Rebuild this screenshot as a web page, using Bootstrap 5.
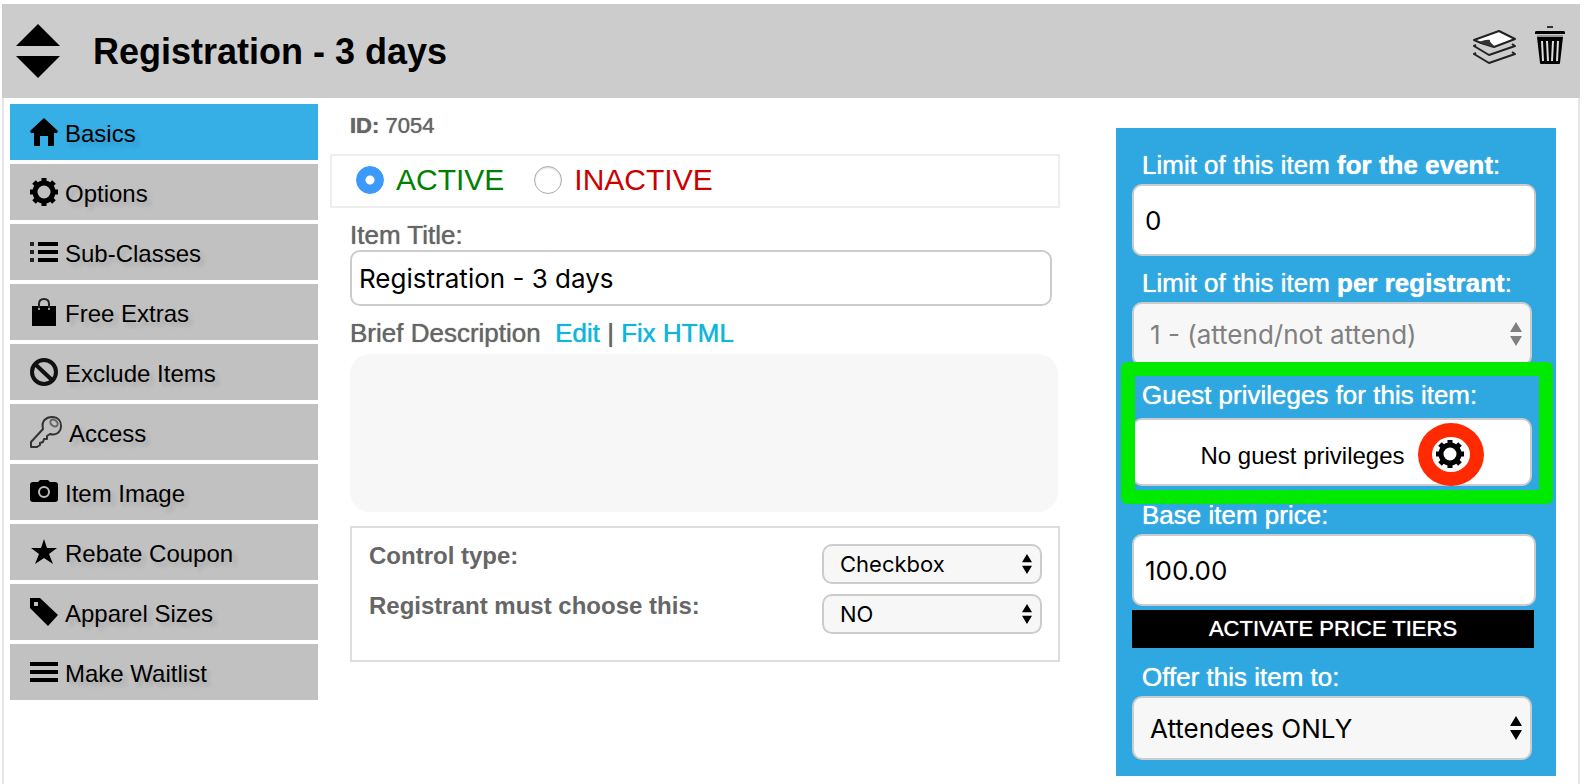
<!DOCTYPE html>
<html lang="en">
<head>
<meta charset="utf-8">
<meta name="viewport" content="width=device-width, initial-scale=1">
<title>Registration - 3 days</title>
<link href="https://cdn.jsdelivr.net/npm/bootstrap@5.3.0/dist/css/bootstrap.min.css" rel="stylesheet">
<style>
  body { font-family: "Liberation Sans", Arial, sans-serif; font-size: 26px; line-height: 36px; color: #666; background: #fff; }
  .page-frame { padding: 4px 8px 0 2px; }
  .item-header { background: #ccc; height: 94px; padding: 0 14px; }
  .item-header h1 { font-size: 36px; line-height: 44px; font-weight: 700; color: #000; margin-left: 33px; padding-top: 2px; }
  .item-body { border: solid #e5e5e5; border-width: 0 2px; padding: 6px 22px 8px 6px; }
  .icon-btn { border: 0; background: none; padding: 0; display: block; }
  .icon-btn svg, .side-link svg { display: block; flex: none; }
  .tool-btn { margin-bottom: 12px; }

  .side-nav { width: 308px; gap: 4px; }
  .side-link { height: 56px; padding-left: 20px; gap: 7px; background: #c1c1c1; color: #000; font-size: 24px; text-decoration: none; text-shadow: 4px 4px 4px rgba(0,0,0,.12); }
  .side-link span { padding-top: 4px; }
  .side-link.current { background: #36aee6; }

  .main-col { margin: 0 56px 0 12px; min-width: 0; }
  .indent { margin-left: 20px; }
  .soft-bold { text-shadow: 0 0 1px currentColor; }
  .item-id { font-size: 22px; line-height: 44px; }
  .status-box { border: 2px solid #eee; height: 54px; padding: 0 24px 2px; margin-top: 6px; font-size: 30px; }
  .status-box .form-check-input { width: 28px; height: 28px; margin: 0 12px 0 0; border: 1px solid #aaa; box-shadow: inset 0 1px 2px rgba(0,0,0,.15); }
  .status-box .form-check-input:checked { background: radial-gradient(circle, #fff 4px, #3b99fc 5px); border-color: #3b99fc; box-shadow: none; }
  .c-on { color: #008000; margin-right: 30px; }
  .c-off { color: #c00; }
  .title-label { line-height: 30px; margin-top: 12px; }
  .field { font-family: Inter, sans-serif; font-size: 26px; color: #000; border: 2px solid #ccc; border-radius: 10px; background-color: #fff; }
  .title-field { height: 56px; padding: 0 7px; }
  .desc-row { line-height: 38px; margin-top: 8px; margin-bottom: 2px; }
  .desc-row a { color: #14b4da; text-decoration: none; }
  .desc-box { background: #f7f7f7; border-radius: 20px; height: 158px; margin-right: 2px; }
  .control-box { border: 2px solid #ddd; margin-top: 14px; padding: 10px 16px 22px 17px; font-size: 24px; font-weight: 700; }
  .control-row { height: 50px; }
  .pick { background: #f7f7f7 url("data:image/svg+xml,%3Csvg xmlns='http://www.w3.org/2000/svg' viewBox='0 0 12 24'%3E%3Cpath d='M6 0l6 10H0zM6 24l6-10H0z'/%3E%3C/svg%3E") no-repeat right 8px center / 12px 24px; }
  .pick:disabled { color: #808080; background-color: #f7f7f7; background-image: url("data:image/svg+xml,%3Csvg xmlns='http://www.w3.org/2000/svg' viewBox='0 0 12 24'%3E%3Cpath fill='%23808080' d='M6 0l6 10H0zM6 24l6-10H0z'/%3E%3C/svg%3E"); }
  .pick-sm { width: 220px; height: 40px; font-size: 22px; padding: 0 30px 0 16px; margin-top: 6px; line-height: 32px; background-size: 10px 20px; }

  .limits { width: 440px; margin-top: 24px; padding: 20px 20px 16px 16px; background: #2fa8e1; color: #fff; }
  .limits label, .limits .guest-label { display: block; padding-left: 10px; line-height: 34px; padding-bottom: 2px; }
  .limits .field-lg { height: 72px; padding: 0 11px; }
  .limits .pick-lg { width: calc(100% - 4px); height: 64px; padding: 0 30px 0 16px; }
  .gap-s { margin-top: 10px; }
  .gap-m { margin-top: 12px; }
  .guest-box { padding-top: 2px; }
  .guest-btn { width: calc(100% - 4px); height: 68px; margin-top: 4px; border: 2px solid #ccc; border-radius: 10px; background: #fff; color: #000; font-size: 24px; gap: 31px; padding: 8px 0 0; }
  .guest-btn svg { margin-bottom: 4px; }
  .tiers { width: calc(100% - 2px); height: 38px; line-height: 38px; margin-top: 4px; border: 0; padding: 0; background: #000; color: #fff; font-size: 22px; }
  .green-mark { inset: -14px -17px -18px -11px; border: 14px solid #00ea00; border-radius: 6px; pointer-events: none; }
  .red-mark { width: 66px; height: 63px; left: -18px; top: -17px; border: 14px solid #ff2a00; border-radius: 50%; }
</style>
</head>
<body>
<svg class="d-none" xmlns="http://www.w3.org/2000/svg">
  <symbol id="gear" viewBox="0 0 28 28">
    <circle cx="14" cy="14" r="9" fill="none" stroke="currentColor" stroke-width="5"/>
    <path stroke="currentColor" stroke-width="5" d="M14 0v5M14 23v5M0 14h5M23 14h5M4 4l4 4M20 20l4 4M24 4l-4 4M8 20l-4 4"/>
  </symbol>
</svg>
<div class="page-frame min-vh-100 d-flex flex-column">
  <header class="item-header d-flex align-items-center">
    <button class="icon-btn" type="button" aria-label="Move item">
      <svg width="44" height="54" viewBox="0 0 44 54"><path d="M22 0l22 22H0zM22 54l22-22H0z"/></svg>
    </button>
    <h1 class="mb-0 me-auto">Registration - 3 days</h1>
    <button class="icon-btn tool-btn me-3" type="button" aria-label="Duplicate item">
      <svg width="46" height="40" viewBox="0 -4 46 40">
        <g fill="none" stroke="#222" stroke-width="2" stroke-linejoin="round">
          <path d="M4 24l-2 1 15 9 26-9-3-2"/><path d="M4 16l-2 1 15 9 26-9-3-2"/>
        </g>
        <path fill="#fff" stroke="#222" stroke-width="2" stroke-linejoin="round" d="M2 11L27 2l16 8-21 8-13-4z"/>
        <path fill="#333" d="M3 12c7 2 9-2 15-1-1 2 3 4 5 7-6 0-8-3-20-6z"/>
      </svg>
    </button>
    <button class="icon-btn tool-btn" type="button" aria-label="Delete item">
      <svg width="32" height="40" viewBox="0 0 32 40">
        <path fill="#333" d="M13 1h6v2h-6z"/><path d="M1 7q0-1 2-1h26q2 0 2 1v2H1z"/><path fill="#999" d="M3 10h26v2H3z"/>
        <path d="M3 12h26l-3 26q0 1-1 1H7q-1 0-1-1z"/>
        <path stroke="#ddd" stroke-width="2" d="M8 16l1 20M13 16l1 20M19 16l-1 20M24 16l-1 20"/>
      </svg>
    </button>
  </header>

  <div class="item-body d-flex flex-grow-1 align-items-start">
    <nav class="side-nav d-flex flex-column flex-shrink-0" aria-label="Item sections">
      <a href="#" class="side-link current d-flex align-items-center"><svg width="28" height="28" viewBox="0 0 28 28"><path d="M14 0l14 13-1 2h-3v13h-6V18h-8v10H4V15H1l-1-2z"/></svg><span>Basics</span></a>
      <a href="#" class="side-link d-flex align-items-center"><svg width="28" height="28"><use href="#gear"/></svg><span>Options</span></a>
      <a href="#" class="side-link d-flex align-items-center"><svg width="28" height="28" viewBox="0 0 28 28"><path fill="#222" d="M0 4h4v4H0zM0 12h4v4H0zM0 20h4v4H0z"/><path d="M8 4h20v4H8zM8 12h20v4H8zM8 20h20v4H8z"/></svg><span>Sub-Classes</span></a>
      <a href="#" class="side-link d-flex align-items-center"><svg width="28" height="28" viewBox="0 0 28 28"><path d="M2 8h24v20H2z"/><path fill="none" stroke="#222" stroke-width="2" d="M9 10V6q0-5 5-5t5 5v4"/><path fill="#999" d="M8 10h2v2H8zM18 10h2v2h-2z"/></svg><span>Free Extras</span></a>
      <a href="#" class="side-link d-flex align-items-center"><svg width="28" height="28" viewBox="0 0 28 28"><g fill="none" stroke="#111" stroke-width="4"><circle cx="14" cy="14" r="12"/><path d="M5 6l18 17"/></g></svg><span>Exclude Items</span></a>
      <a href="#" class="side-link d-flex align-items-center"><svg width="32" height="32" viewBox="0 0 32 32"><g fill="none" stroke="#333" stroke-width="2" stroke-linejoin="round"><path d="M13 13C11 5 16 1 22 1c6 0 9 4 9 9 0 6-5 10-11 8l-3 2v3h-3l-1 3-3 1v2l-3 2H1v-5z"/><ellipse cx="24" cy="7" rx="4" ry="3" transform="rotate(40 24 7)" stroke="#666"/></g></svg><span>Access</span></a>
      <a href="#" class="side-link d-flex align-items-center"><svg width="28" height="28" viewBox="0 0 28 28"><path d="M3 4h5l2-2h8l2 2h5q3 0 3 3v14q0 3-3 3H3q-3 0-3-3V7q0-3 3-3z"/><circle cx="14" cy="14" r="5" fill="none" stroke="#bbb" stroke-width="2"/></svg><span>Item Image</span></a>
      <a href="#" class="side-link d-flex align-items-center"><svg width="28" height="28" viewBox="0 0 28 28"><path d="M14 1l3 9h10l-8 6 4 10-9-6-9 6 4-10-8-6h10z"/></svg><span>Rebate Coupon</span></a>
      <a href="#" class="side-link d-flex align-items-center"><svg width="28" height="28" viewBox="0 0 28 28"><path fill-rule="evenodd" d="M0 0h10l18 17-10 11L0 10zM4 4v4h4V4z"/></svg><span>Apparel Sizes</span></a>
      <a href="#" class="side-link d-flex align-items-center"><svg width="28" height="28" viewBox="0 0 28 28"><path d="M0 4h28v4H0zM0 12h28v4H0zM0 20h28v4H0z"/></svg><span>Make Waitlist</span></a>
    </nav>

    <main class="main-col flex-grow-1">
      <div class="item-id indent soft-bold"><b>ID:</b> 7054</div>
      <div class="status-box d-flex align-items-center">
        <input class="form-check-input" type="radio" name="status" id="st-on" checked><label class="c-on" for="st-on">ACTIVE</label>
        <input class="form-check-input" type="radio" name="status" id="st-off"><label class="c-off" for="st-off">INACTIVE</label>
      </div>
      <div class="indent">
        <label class="title-label soft-bold d-block" for="title">Item Title:</label>
        <div class="pe-2"><input class="field title-field w-100 d-block" id="title" type="text" value="Registration - 3 days"></div>
        <div class="desc-row soft-bold">Brief Description&nbsp; <a href="#">Edit</a> | <a href="#">Fix HTML</a></div>
        <div class="desc-box"></div>
        <div class="control-box">
          <div class="control-row d-flex justify-content-between align-items-start">
            <label for="ctype">Control type:</label>
            <select class="form-select field pick pick-sm" id="ctype"><option>Checkbox</option></select>
          </div>
          <div class="control-row d-flex justify-content-between align-items-start">
            <label for="must">Registrant must choose this:</label>
            <select class="form-select field pick pick-sm" id="must"><option>NO</option></select>
          </div>
        </div>
      </div>
    </main>

    <aside class="limits flex-shrink-0">
      <label class="soft-bold" for="lim-event">Limit of this item <b>for the event</b>:</label>
      <input class="field field-lg w-100 d-block" id="lim-event" type="text" value="0">
      <label class="gap-s soft-bold" for="lim-reg">Limit of this item <b>per registrant</b>:</label>
      <select class="form-select field pick pick-lg" id="lim-reg" disabled><option>1 - (attend/not attend)</option></select>
      <div class="gap-s guest-box position-relative">
        <div class="guest-label soft-bold">Guest privileges for this item:</div>
        <button class="guest-btn d-flex align-items-center justify-content-center" type="button">
          <span>No guest privileges</span>
          <span class="position-relative"><svg class="d-block" width="28" height="28"><use href="#gear"/></svg><span class="red-mark position-absolute"></span></span>
        </button>
        <div class="green-mark position-absolute"></div>
      </div>
      <label class="gap-m soft-bold" for="price">Base item price:</label>
      <input class="field field-lg w-100 d-block" id="price" type="text" value="100.00">
      <button class="tiers soft-bold d-block" type="button">ACTIVATE PRICE TIERS</button>
      <label class="gap-m soft-bold" for="offer">Offer this item to:</label>
      <select class="form-select field pick pick-lg" id="offer"><option>Attendees ONLY</option></select>
    </aside>
  </div>
</div>
<script src="https://cdn.jsdelivr.net/npm/bootstrap@5.3.0/dist/js/bootstrap.bundle.min.js"></script>
</body>
</html>
